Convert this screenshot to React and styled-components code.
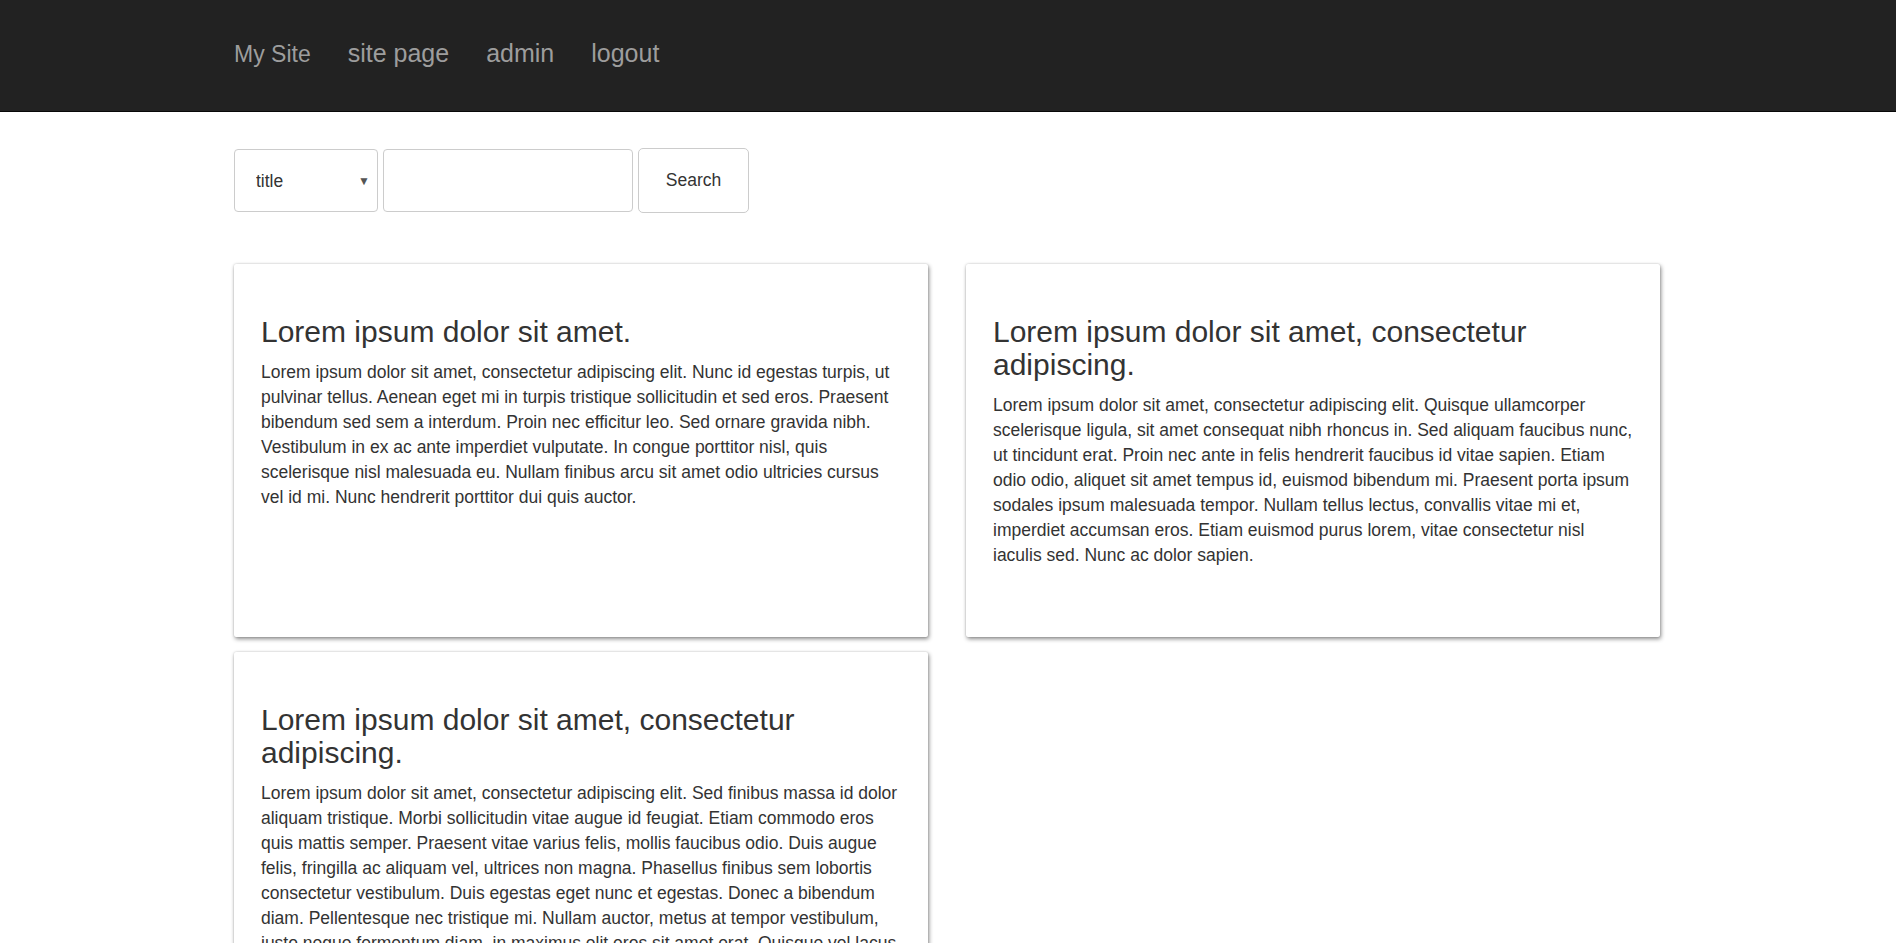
import React from 'react';
import styled, { createGlobalStyle } from 'styled-components';

const GlobalStyle = createGlobalStyle`
	html {
		overflow-y: hidden;
	}
	body {
		margin: 0;
		font-family: "Liberation Sans", Arial, Helvetica, sans-serif;
		font-size: 17.5px;
		line-height: 25px;
		color: #333;
		background: #fff;
	}
	* {
		box-sizing: border-box;
	}
`;

const Navbar = styled.nav`
	height: 112px;
	background-color: #222;
	border-bottom: 1px solid #080808;
`;

const Container = styled.div`
	width: 1428px;
	margin: 0 auto;
`;

const NavList = styled.ul`
	display: flex;
	align-items: center;
	gap: 37px;
	height: 110px;
	margin: 0 auto;
	padding: 0;
	list-style: none;
`;

const NavLink = styled.a`
	font-size: ${props => props.brand ? '23px' : '25px'};
	color: #9d9d9d;
	text-decoration: none;
	cursor: pointer;

	:hover {
		color: #fff;
	}
`;

const SearchForm = styled.form`
	display: flex;
	align-items: center;
	gap: 5px;
	margin-top: 36px;
`;

const SelectWrap = styled.div`
	position: relative;
	width: 144px;
	height: 63px;

	.arrow {
		position: absolute;
		right: 8px;
		top: 50%;
		transform: translateY(-50%);
		font-size: 12px;
		color: #555;
		pointer-events: none;
	}
`;

const Select = styled.select`
	appearance: none;
	width: 100%;
	height: 100%;
	padding: 0 0 0 21px;
	border: 1px solid #ccc;
	border-radius: 4px;
	background: #fff;
	font-family: inherit;
	font-size: 17.5px;
	color: #333;
`;

const Input = styled.input`
	width: 250px;
	height: 63px;
	padding: 0 16px;
	border: 1px solid #ccc;
	border-radius: 4px;
	font-family: inherit;
	font-size: 17.5px;
`;

const Button = styled.button`
	width: 111px;
	height: 65px;
	border: 1px solid #ccc;
	border-radius: 5px;
	background: #fff;
	font-family: inherit;
	font-size: 17.5px;
	color: #333;
	cursor: pointer;
`;

const Grid = styled.div`
	display: grid;
	grid-template-columns: 694px 694px;
	column-gap: 38px;
	row-gap: 15px;
	margin-top: 51px;
`;

const Card = styled.div`
	min-height: 373px;
	padding: 27px 27px 20px;
	border-radius: 2px;
	background: #fff;
	box-shadow: 1px 2px 4px rgba(0, 0, 0, 0.45), 0 0 2px rgba(0, 0, 0, 0.18);

	h3 {
		margin: 24px 0 12px;
		font-size: 30px;
		font-weight: 500;
		line-height: 33px;
	}

	p {
		margin: 0 0 12.5px;
	}
`;

const posts = [
	{
		title: 'Lorem ipsum dolor sit amet.',
		body: 'Lorem ipsum dolor sit amet, consectetur adipiscing elit. Nunc id egestas turpis, ut pulvinar tellus. Aenean eget mi in turpis tristique sollicitudin et sed eros. Praesent bibendum sed sem a interdum. Proin nec efficitur leo. Sed ornare gravida nibh. Vestibulum in ex ac ante imperdiet vulputate. In congue porttitor nisl, quis scelerisque nisl malesuada eu. Nullam finibus arcu sit amet odio ultricies cursus vel id mi. Nunc hendrerit porttitor dui quis auctor.',
	},
	{
		title: 'Lorem ipsum dolor sit amet, consectetur adipiscing.',
		body: 'Lorem ipsum dolor sit amet, consectetur adipiscing elit. Quisque ullamcorper scelerisque ligula, sit amet consequat nibh rhoncus in. Sed aliquam faucibus nunc, ut tincidunt erat. Proin nec ante in felis hendrerit faucibus id vitae sapien. Etiam odio odio, aliquet sit amet tempus id, euismod bibendum mi. Praesent porta ipsum sodales ipsum malesuada tempor. Nullam tellus lectus, convallis vitae mi et, imperdiet accumsan eros. Etiam euismod purus lorem, vitae consectetur nisl iaculis sed. Nunc ac dolor sapien.',
	},
	{
		title: 'Lorem ipsum dolor sit amet, consectetur adipiscing.',
		body: 'Lorem ipsum dolor sit amet, consectetur adipiscing elit. Sed finibus massa id dolor aliquam tristique. Morbi sollicitudin vitae augue id feugiat. Etiam commodo eros quis mattis semper. Praesent vitae varius felis, mollis faucibus odio. Duis augue felis, fringilla ac aliquam vel, ultrices non magna. Phasellus finibus sem lobortis consectetur vestibulum. Duis egestas eget nunc et egestas. Donec a bibendum diam. Pellentesque nec tristique mi. Nullam auctor, metus at tempor vestibulum, justo neque fermentum diam, in maximus elit eros sit amet erat. Quisque vel lacus vitae nibh pulvinar tincidunt. Curabitur non sem at sapien tempor dictum.',
	},
];

const App = () => {
	return (
		<>
			<GlobalStyle />
			<Navbar>
				<Container>
					<NavList>
						<li><NavLink brand>My Site</NavLink></li>
						<li><NavLink>site page</NavLink></li>
						<li><NavLink>admin</NavLink></li>
						<li><NavLink>logout</NavLink></li>
					</NavList>
				</Container>
			</Navbar>
			<Container>
				<SearchForm onSubmit={ e => e.preventDefault() }>
					<SelectWrap>
						<Select defaultValue='title'>
							<option value='title'>title</option>
							<option value='body'>body</option>
						</Select>
						<span className='arrow'>▼</span>
					</SelectWrap>
					<Input type='text' />
					<Button type='submit'>Search</Button>
				</SearchForm>
				<Grid>
					{ posts.map((post, i) => (
						<Card key={ i }>
							<h3>{ post.title }</h3>
							<p>{ post.body }</p>
						</Card>
					)) }
				</Grid>
			</Container>
		</>
	);
};

export default App;
